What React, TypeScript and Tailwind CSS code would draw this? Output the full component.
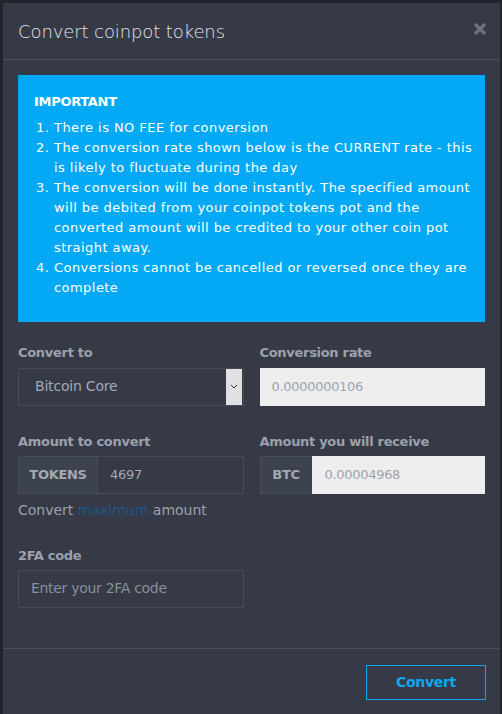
import React from 'react';

const notes = [
  'There is NO FEE for conversion',
  'The conversion rate shown below is the CURRENT rate - this is likely to fluctuate during the day',
  'The conversion will be done instantly. The specified amount will be debited from your coinpot tokens pot and the converted amount will be credited to your other coin pot straight away.',
  'Conversions cannot be cancelled or reversed once they are complete',
];

export default function App() {
  return (
    <div
      className="h-[714px] w-[502px] overflow-hidden bg-[#22252d] pl-[3px] pt-[3px] pr-[2px]"
      style={{ fontFamily: '"DejaVu Sans", sans-serif' }}
    >
      <div className="flex h-full flex-col bg-[#363a47]">
        {/* Header */}
        <div className="flex h-[57px] items-center justify-between border-b border-[#4a4f5b] pl-[15px] pr-[14px]">
          <h4 className="text-[18px] font-light tracking-[-0.1px] text-[#e3e5e9]">Convert coinpot tokens</h4>
          <svg width="12" height="12" viewBox="0 0 12 12" className="mb-[4px]">
            <path d="M2 2 L10 10 M10 2 L2 10" stroke="#6c717c" strokeWidth="3.4" strokeLinecap="round" />
          </svg>
        </div>

        {/* Body */}
        <div className="flex-1 px-[15px] pt-[15px]">
          <div className="h-[247px] bg-[#03a9f4] pl-[16px] pr-[12px] pt-[17px] text-[13px] leading-[20px] text-white">
            <div className="font-bold tracking-[-0.3px]">IMPORTANT</div>
            <ol className="mt-[6px] list-decimal pl-[20px] tracking-[0.45px]">
              {notes.map((n) => (
                <li key={n}>{n}</li>
              ))}
            </ol>
          </div>

          <div className="mt-[21px] grid grid-cols-2 gap-x-[16px] gap-y-[26px]">
            <div>
              <label className="block text-[13px] font-bold tracking-[-0.3px] text-[#9ca1ab]">Convert to</label>
              <div className="mt-[5px] flex h-[38px] items-center border border-[#474c58]">
                <span className="flex-1 pl-[16px] text-[14px] tracking-[-0.2px] text-[#a4a9b3]">Bitcoin Core</span>
                <div className="mr-[1px] flex h-[36px] w-[16px] items-center justify-center bg-[#e1e1e1]">
                  <svg width="8" height="5" viewBox="0 0 8 5">
                    <path d="M1 1 L4 4 L7 1" stroke="#333" strokeWidth="1" fill="none" />
                  </svg>
                </div>
              </div>
            </div>
            <div>
              <label className="block text-[13px] font-bold tracking-[-0.3px] text-[#9ca1ab]">Conversion rate</label>
              <div className="mt-[5px] flex h-[38px] items-center bg-[#eeeeee] pl-[12px] text-[13px] tracking-[-0.3px] text-[#9aa3b4]">
                0.0000000106
              </div>
            </div>

            <div>
              <label className="block text-[13px] font-bold tracking-[-0.3px] text-[#9ca1ab]">Amount to convert</label>
              <div className="mt-[5px] flex h-[38px] border border-[#474c58]">
                <span className="flex w-[79px] items-center justify-center border-r border-[#474c58] bg-[#3d4250] text-[13px] font-bold tracking-[-0.3px] text-[#a4a9b3]">
                  TOKENS
                </span>
                <span className="flex flex-1 items-center pl-[12px] text-[13px] tracking-[-0.3px] text-[#a4a9b3]">4697</span>
              </div>
              <div className="mt-[6px] text-[14px] text-[#9ca1ab]">
                Convert <span className="text-[#1d5789]">maximum</span> amount
              </div>
            </div>
            <div>
              <label className="block text-[13px] font-bold tracking-[-0.3px] text-[#9ca1ab]">Amount you will receive</label>
              <div className="mt-[5px] flex h-[38px]">
                <span className="flex w-[52px] items-center justify-center border border-r-0 border-[#474c58] bg-[#3d4250] text-[13px] font-bold tracking-[-0.3px] text-[#a4a9b3]">
                  BTC
                </span>
                <span className="flex flex-1 items-center bg-[#eeeeee] pl-[13px] text-[13px] tracking-[-0.3px] text-[#9aa3b4]">
                  0.00004968
                </span>
              </div>
            </div>

            <div className="-mt-[1px]">
              <label className="block text-[13px] font-bold tracking-[-0.3px] text-[#9ca1ab]">2FA code</label>
              <div className="mt-[4px] flex h-[38px] items-center border border-[#474c58] pl-[12px] text-[14px] tracking-[-0.3px] text-[#8a8f99]">
                Enter your 2FA code
              </div>
            </div>
          </div>
        </div>

        {/* Footer */}
        <div className="flex h-[66px] items-center justify-end border-t border-[#4a4f5b] pr-[14px]">
          <button className="mb-[-2px] h-[35px] w-[120px] border-[1.5px] border-[#0aa8f0] text-[14px] font-bold tracking-[-0.3px] text-[#0aa8f0]">
            Convert
          </button>
        </div>
      </div>
    </div>
  );
}
